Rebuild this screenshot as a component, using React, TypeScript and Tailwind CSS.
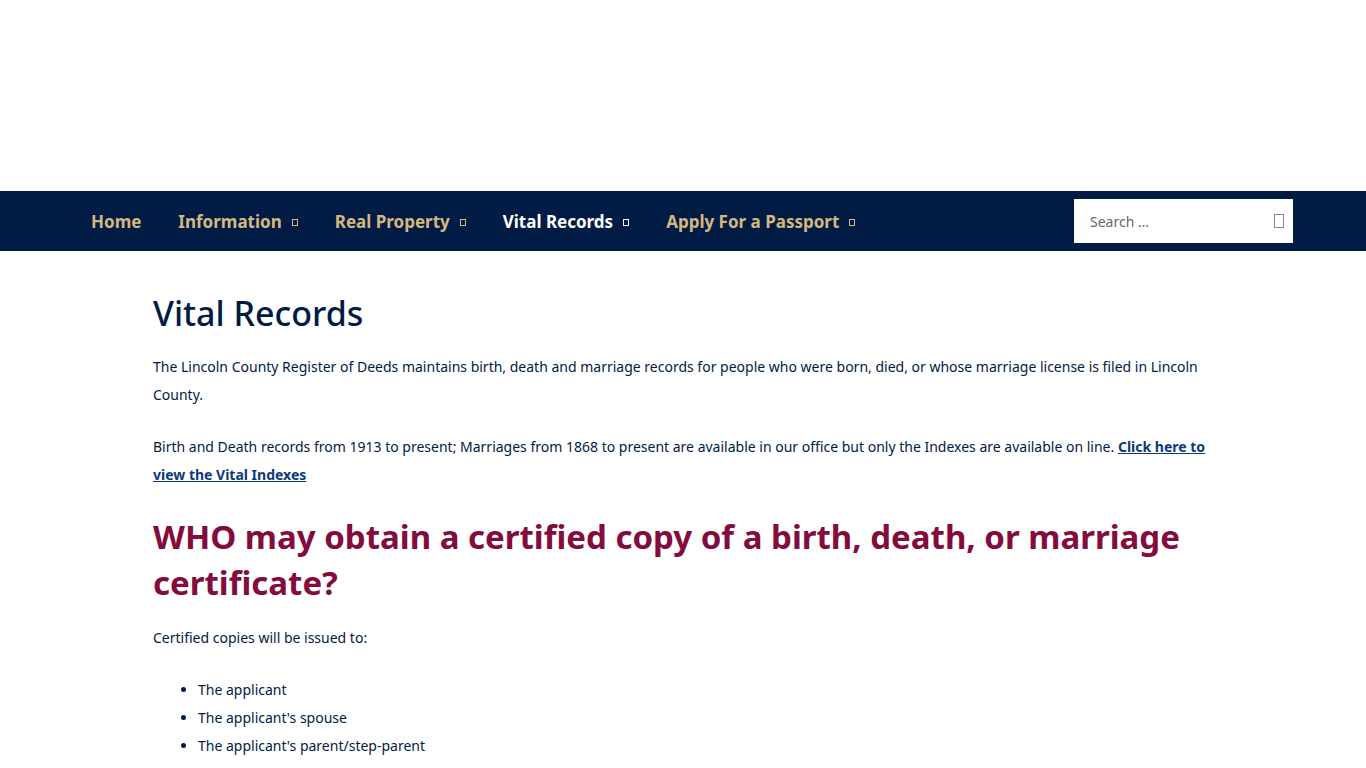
import React from "react";

const font = { fontFamily: '"Noto Sans", "Open Sans", sans-serif' };

function Caret() {
  return <span className="ml-[10px] inline-block h-[7px] w-[6px] border border-current" />;
}

const items = [
  { label: "Home", drop: false, active: false },
  { label: "Information", drop: true, active: false },
  { label: "Real Property", drop: true, active: false },
  { label: "Vital Records", drop: true, active: true },
  { label: "Apply For a Passport", drop: true, active: false },
];

export default function App() {
  return (
    <div className="min-h-screen bg-white text-[#001b44]" style={font}>
      <header className="h-[191px]" />
      <nav className="flex h-[60px] items-center bg-[#001b44] pl-[91px] pr-[73px]">
        <ul className="flex items-center gap-[37px] pt-[2px]">
          {items.map((it) => (
            <li
              key={it.label}
              className={`flex items-center text-[17px] font-bold ${it.active ? "text-white" : "text-[#d6b780]"}`}
            >
              {it.label}
              {it.drop && <Caret />}
            </li>
          ))}
        </ul>
        <div className="ml-auto flex h-[44px] w-[219px] items-center justify-between bg-white pl-[16px] pr-[9px]">
          <span className="text-[14px] text-[#666]">Search …</span>
          <span className="h-[14px] w-[10px] border border-[#888]" />
        </div>
      </nav>
      <main className="mx-auto w-[1060px] pt-[40px]">
        <h1 className="text-[34px] font-medium leading-[44px]">Vital Records</h1>
        <p className="mt-[18px] text-[14px] leading-[28px]">
          The Lincoln County Register of Deeds maintains birth, death and marriage records for people who were born,
          died, or whose marriage license is filed in Lincoln County.
        </p>
        <p className="mt-[24px] text-[14px] leading-[28px]">
          Birth and Death records from 1913 to present; Marriages from 1868 to present are available in our office but
          only the Indexes are available on line.{" "}
          <a className="font-bold text-[#0a3a7c] underline">Click here to view the Vital Indexes</a>
        </p>
        <h2 className="mt-[25px] text-[33px] font-bold leading-[46px] text-[#840b3d]">
          WHO may obtain a certified copy of a birth, death, or marriage certificate?
        </h2>
        <p className="mt-[18px] text-[14px] leading-[28px]">Certified copies will be issued to:</p>
        <ul className="mt-[24px] list-disc pl-[45px] text-[14px] leading-[28px]">
          <li>The applicant</li>
          <li>The applicant's spouse</li>
          <li>The applicant's parent/step-parent</li>
          <li>The applicant's child/step-child (must be of legal age)</li>
        </ul>
      </main>
    </div>
  );
}
